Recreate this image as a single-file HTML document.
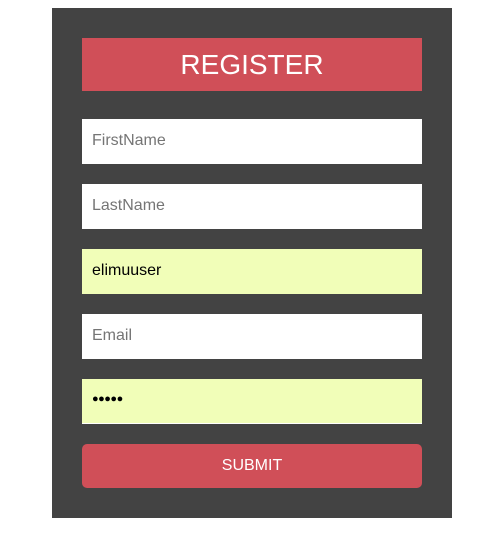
<!DOCTYPE html>
<html><head><style>
html,body{margin:0;padding:0;background:#fff;width:495px;height:533px;overflow:hidden;font-family:"Liberation Sans",Arial,sans-serif}
.box{position:absolute;left:52px;top:8px;width:400px;height:510px;background:#434343}
.h{position:absolute;left:30px;top:30px;width:340px;height:53px;background:#d04f58;color:#fff;font-size:28px;text-align:center;line-height:53px}
.i{position:absolute;left:30px;width:340px;height:45px;background:#fff;font-size:16px;line-height:43px;box-sizing:border-box;padding-left:10px;color:#757575}
.y{background:#f1feb8;color:#000}
.b{position:absolute;left:30px;top:436px;width:340px;height:44px;background:#d04f58;border-radius:5px;color:#fff;font-size:16px;text-align:center;line-height:43px}
</style></head><body>
<div class="box">
<div class="h">REGISTER</div>
<div class="i" style="top:111px">FirstName</div>
<div class="i" style="top:176px">LastName</div>
<div class="i y" style="top:241px">elimuuser</div>
<div class="i" style="top:306px">Email</div>
<div class="i y" style="top:371px;border-bottom:1px solid #fff;font-size:11px;letter-spacing:-0.5px;line-height:41px">●●●●●</div>
<div class="b">SUBMIT</div>
</div>
</body></html>
